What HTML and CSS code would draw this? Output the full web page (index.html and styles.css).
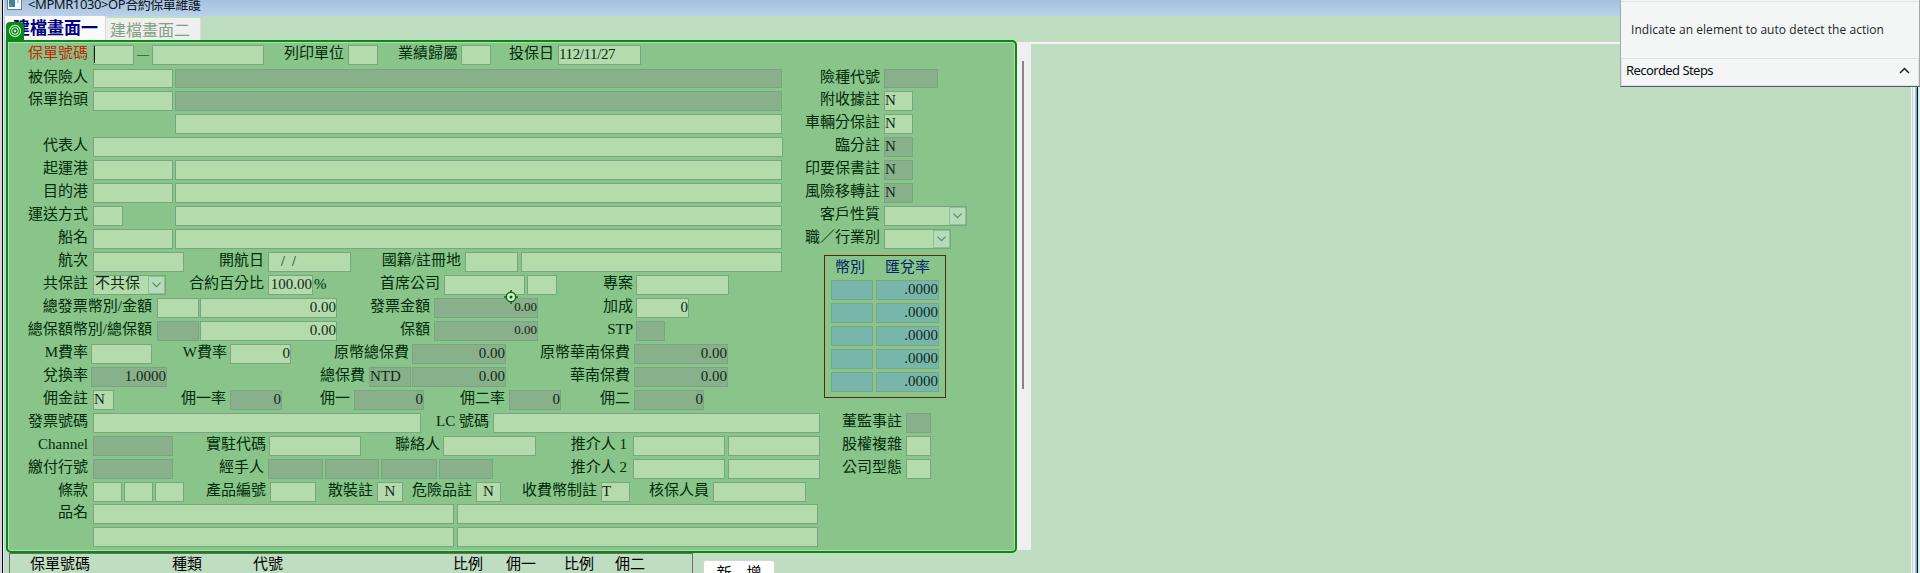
FILE: index.html
```html
<!DOCTYPE html>
<html lang="zh-Hant">
<head>
<meta charset="utf-8">
<title>OP合約保單維護</title>
<link rel="stylesheet" href="styles.css">
</head>
<body>
<div class="window">
  <header class="titlebar">
    <svg class="app-icon" width="15" height="10" viewBox="0 0 15 10"><path d="M0 0h15v10H0z" fill="#6d7f8c"/><path d="M1 0h13v9H1z" fill="#f4f7f8"/><path d="M2 0h6v7H2z" fill="#3f7fa0"/><path d="M2 4h3v3H2z" fill="#4f9a76"/><path d="M10 0h2v3h-2z" fill="#c3d3dc"/></svg>
    <span class="title">&lt;MPMR1030&gt;OP合約保單維護</span>
  </header>
  <nav class="tabs">
    <span class="tab active">建檔畫面一</span><span class="tab">建檔畫面二</span>
    <svg class="badge" width="18" height="19" viewBox="0 0 18 19"><path d="M0 19V4a4 4 0 0 1 4-4h10a4 4 0 0 1 4 4v15z" fill="#0a8a14"/><g fill="none" stroke="#d5efd5" stroke-width="1.1"><circle cx="9" cy="9" r="5.6"/><circle cx="9" cy="9" r="3.2"/></g><circle cx="9" cy="9" r="1.2" fill="#d5efd5"/></svg>
  </nav>
  <div class="work">
    <main class="panel">
      <section class="rows">
        <div class="row r-policy"><label class="req">保單號碼</label><i class="f caret"></i><label class="dash">—</label><i class="f"></i><label>列印單位</label><i class="f"></i><label class="near">業績歸屬</label><i class="f"></i><label>投保日</label><i class="f date">112/11/27</i></div>
        <div class="row r-insured"><label>被保險人</label><i class="f"></i><i class="f d"></i><label>險種代號</label><i class="f d"></i></div>
        <div class="row r-pair"><label>保單抬頭</label><i class="f"></i><i class="f d"></i><label>附收據註</label><i class="f">N</i></div>
        <div class="row r-cont"><label></label><i class="f"></i><label>車輛分保註</label><i class="f">N</i></div>
        <div class="row r-rep"><label>代表人</label><i class="f"></i><label>臨分註</label><i class="f d">N</i></div>
        <div class="row r-pair"><label>起運港</label><i class="f"></i><i class="f"></i><label>印要保書註</label><i class="f d">N</i></div>
        <div class="row r-pair"><label>目的港</label><i class="f"></i><i class="f"></i><label>風險移轉註</label><i class="f d">N</i></div>
        <div class="row r-ship"><label>運送方式</label><i class="f"></i><span></span><i class="f"></i><label>客戶性質</label><i class="f sel"><b><svg width="9" height="6" viewBox="0 0 9 6"><path d="M.5 .7l4 4 4-4"/></svg></b></i></div>
        <div class="row r-vessel"><label>船名</label><i class="f"></i><i class="f"></i><label>職／行業別</label><i class="f sel"><b><svg width="9" height="6" viewBox="0 0 9 6"><path d="M.5 .7l4 4 4-4"/></svg></b></i></div>
      </section>
      <section class="middle">
        <div class="rows">
          <div class="row r-voyage"><label>航次</label><i class="f"></i><label>開航日</label><i class="f blank-date">/&nbsp; /</i><label>國籍/註冊地</label><i class="f"></i><i class="f"></i></div>
          <div class="row r-share"><label>共保註</label><i class="f sel">不共保<b><svg width="9" height="6" viewBox="0 0 9 6"><path d="M.5 .7l4 4 4-4"/></svg></b></i><label>合約百分比</label><i class="f n pct">100.00</i><span class="unit">%</span><label>首席公司</label><i class="f"></i><i class="f"></i><label class="near">專案</label><i class="f"></i></div>
          <div class="row r-invoice"><label class="wide">總發票幣別/金額</label><i class="f"></i><i class="f n">0.00</i><label>發票金額</label><i class="f d n small">0.00</i><label class="near">加成</label><i class="f n">0</i></div>
          <div class="row r-sum"><label class="wide">總保額幣別/總保額</label><i class="f d"></i><i class="f n">0.00</i><label>保額</label><i class="f d n small">0.00</i><label class="near">STP</label><i class="f d"></i></div>
          <div class="row r-rate"><label>M費率</label><i class="f"></i><label class="near">W費率</label><i class="f n">0</i><label class="near">原幣總保費</label><i class="f d n">0.00</i><label>原幣華南保費</label><i class="f d n">0.00</i></div>
          <div class="row r-exchange"><label>兌換率</label><i class="f d n">1.0000</i><label>總保費</label><i class="f d">NTD</i><i class="f d n">0.00</i><label>華南保費</label><i class="f d n">0.00</i></div>
          <div class="row r-comm"><label>佣金註</label><i class="f">N</i><label>佣一率</label><i class="f d n">0</i><label>佣一</label><i class="f d n">0</i><label>佣二率</label><i class="f d n">0</i><label>佣二</label><i class="f d n">0</i></div>
        </div>
        <aside class="rates">
          <div class="rates-head"><span>幣別</span><span>匯兌率</span></div>
          <div class="rates-row"><i class="f t"></i><i class="f t n">.0000</i></div>
          <div class="rates-row"><i class="f t"></i><i class="f t n">.0000</i></div>
          <div class="rates-row"><i class="f t"></i><i class="f t n">.0000</i></div>
          <div class="rates-row"><i class="f t"></i><i class="f t n">.0000</i></div>
          <div class="rates-row"><i class="f t"></i><i class="f t n">.0000</i></div>
        </aside>
      </section>
      <section class="rows">
        <div class="row r-bill"><label>發票號碼</label><i class="f"></i><label>LC 號碼</label><i class="f"></i><label>董監事註</label><i class="f d"></i></div>
        <div class="row r-channel"><label>Channel</label><i class="f d"></i><label class="near">實駐代碼</label><i class="f"></i><label class="near">聯絡人</label><i class="f"></i><label class="ref">推介人 1</label><i class="f"></i><i class="f"></i><label>股權複雜</label><i class="f"></i></div>
        <div class="row r-payer"><label>繳付行號</label><i class="f d"></i><label>經手人</label><i class="f d"></i><i class="f d"></i><i class="f d"></i><i class="f d"></i><label class="ref">推介人 2</label><i class="f"></i><i class="f"></i><label>公司型態</label><i class="f"></i></div>
        <div class="row r-clause"><label>條款</label><i class="f"></i><i class="f"></i><i class="f"></i><label>產品編號</label><i class="f"></i><label>散裝註</label><i class="f c">N</i><label>危險品註</label><i class="f c">N</i><label>收費幣制註</label><i class="f">T</i><label>核保人員</label><i class="f"></i></div>
        <div class="row r-goods"><label>品名</label><i class="f"></i><i class="f"></i></div>
        <div class="row r-goods"><label></label><i class="f"></i><i class="f"></i></div>
      </section>
      <svg class="target" width="14" height="14" viewBox="0 0 14 14"><path d="M7 0v14M0 7h14" stroke="#0b6d14" stroke-width="1.6"/><circle cx="7" cy="7" r="4.7" fill="#d3ecd0" stroke="#0b6d14" stroke-width="1.5"/><circle cx="7" cy="7" r="1.5" fill="#0b5a12"/></svg>
    </main>
    <div class="scroll"><div class="thumb"></div></div>
    <div class="rest"></div>
  </div>
  <footer class="bottom">
    <div class="list-head"><span>保單號碼</span><span>種類</span><span>代號</span><span>比例</span><span>佣一</span><span>比例</span><span>佣二</span></div>
    <button class="add">新　增</button>
  </footer>
  <div class="edge"></div>
</div>
<div class="recorder">
  <div class="hint">Indicate an element to auto detect the action</div>
  <div class="steps"><span>Recorded Steps</span><svg width="11" height="7" viewBox="0 0 11 7"><path d="M1 6l4.500-4.500L10 6" fill="none" stroke="#222" stroke-width="1.5"/></svg></div>
</div>
</body>
</html>
```

FILE: styles.css
```css
* { box-sizing: border-box; }
body {
  margin: 0;
  width: 1920px;
  height: 573px;
  overflow: hidden;
  background: #bfddc1;
  font: 400 15px/18px "Liberation Serif", "Noto Sans CJK TC", serif;
}
i { font-style: normal; }
.window {
  position: relative;
  height: 573px;
  padding-left: 5px;
  overflow: hidden;
  background: linear-gradient(90deg, #d8d8d8 0 2px, #05070c 2px 3px, #e6eef6 3px 4px, #b5cde6 4px 5px, transparent 5px);
}

/* Title bar */
.titlebar {
  display: flex;
  height: 16px;
  padding-left: 2px;
  overflow: hidden;
  background: linear-gradient(#a7c0de, #b9d1ea);
}
.title {
  margin: -5px 0 0 6px;
  font: 13px/18px "Noto Sans", "Noto Sans CJK TC", sans-serif;
  color: #0b1420;
  letter-spacing: -0.42px;
}

/* Tabs */
.tabs { position: relative; display: flex; height: 24px; align-items: flex-end; }
.tab {
  width: 95px;
  height: 22px;
  padding-left: 4px;
  background: #eeefee;
  border-right: 1px solid #dcdcdc;
  font-size: 16px;
  line-height: 25px;
  color: #83a083;
  white-space: nowrap;
}
.tab.active {
  width: 101px;
  height: 24px;
  padding-left: 8px;
  background: #fafafa;
  font-weight: 700;
  font-size: 17px;
  line-height: 26px;
  color: #000080;
}
.badge { position: absolute; left: 1px; top: 6px; }

/* Work area */
.work { display: flex; height: 513px; padding-left: 1px; }
.panel {
  position: relative;
  width: 1011px;
  border: 2px solid #068a10;
  border-radius: 0 5px 5px 5px;
  box-shadow: inset 0 0 0 1px #b2dab3;
  background: #89c48a;
  padding: 3px 0 0 1px;
}
.scroll { width: 14px; height: 508px; margin-top: 2px; padding: 19px 0 0 5px; background: #efefef; }
.thumb { width: 2px; height: 328px; background: #868686; }
.rest { flex: 1; margin-top: 2px; border-top: 2px solid #f4f4f4; }

.row { display: grid; height: 23px; --gap: 2px; }
.row label {
  padding-right: 4px;
  text-align: right;
  line-height: 17px;
  color: #002c08;
  white-space: nowrap;
}
.row label:first-child { padding-right: 5px; }
.row label.wide { padding-right: 5px; }
.row label.near { padding-right: 3px; }
.row label.req { color: #c02a08; }
.row label.dash { padding: 1px 3px 0 0; font-size: 12px; }
.row label.ref { padding-right: 6px; }
.unit { padding-left: 1px; color: #002c08; line-height: 19px; }

/* Fields */
.f {
  display: block;
  height: 20px;
  padding: 0;
  border: 1px solid #7aa582;
  background: #b4dbab;
  color: #0f2a14;
  line-height: 17px;
  white-space: nowrap;
  overflow: hidden;
}
.row .f + .f { margin-left: var(--gap); }
.f.d { background: #88b08a; }
.f.t { background: #78b6ac; }
.f.n { text-align: right; }
.f.c { text-align: center; }
.f.small { font-size: 13px; line-height: 16px; }
.f.date { letter-spacing: -0.4px; }
.f.blank-date { padding-left: 12px; font-size: 14px; }
.f.caret::before { content: ""; display: block; width: 1px; height: 17px; background: #06200c; }
.f.sel { display: flex; justify-content: flex-end; padding: 0 1px; line-height: 15px; }
.f.sel b {
  display: flex;
  width: 17px;
  flex: none;
  margin-left: auto;
  margin-right: -1px;
  align-items: center;
  justify-content: center;
  border: 1px solid #8fbd97;
  background: #b5dcb9;
}
.f.sel path { fill: none; stroke: #5a8a63; stroke-width: 1.1; }

/* Column tracks of each form row */
.r-policy { height: 24px; grid-template-columns: 84px 41px 18px 112px 84px 30px 83px 30px 67px 83px; }
.r-insured { height: 22px; grid-template-columns: 84px 80px 609px 102px 54px; }
.r-insured .f { height: 19px; }
.r-pair { grid-template-columns: 84px 80px 609px 102px 29px; }
.r-cont { grid-template-columns: 166px 607px 102px 29px; }
.r-rep { grid-template-columns: 84px 690px 101px 29px; }
.r-ship { grid-template-columns: 84px 30px 52px 607px 102px 83px; }
.r-vessel { grid-template-columns: 84px 80px 609px 102px 67px; }
.r-voyage { --gap: 3px; grid-template-columns: 84px 91px 84px 83px 114px 53px 264px; }
.r-share { grid-template-columns: 84px 73px 102px 45px 20px 111px 81px 32px 79px 93px; }
.r-invoice { --gap: 1px; grid-template-columns: 148px 42px 138px 97px 104px 98px 53px; }
.r-sum { --gap: 1px; grid-template-columns: 148px 42px 138px 97px 104px 98px 29px; }
.r-rate { grid-template-columns: 82px 61px 78px 61px 121px 94px 128px 94px; }
.r-exchange { --gap: 1px; grid-template-columns: 82px 76px 202px 42px 95px 128px 94px; }
.row.r-rate label:first-child, .row.r-exchange label:first-child { padding-right: 3px; }
.r-comm { grid-template-columns: 84px 21px 116px 52px 72px 70px 85px 52px 73px 70px; }
.r-bill { grid-template-columns: 84px 328px 72px 327px 86px 25px; }
.r-channel { --gap: 3px; grid-template-columns: 84px 80px 96px 92px 82px 93px 97px 92px 95px 86px 25px; }
.r-payer { grid-template-columns: 84px 80px 95px 55px 56px 58px 56px 140px 92px 95px 86px 25px; }
.r-payer label + .f + .f:not(.d) { --gap: 3px; }
.r-clause { height: 22px; grid-template-columns: 84px 29px 31px 31px 86px 46px 61px 26px 73px 25px 100px 29px 83px 93px; }
.r-goods { --gap: 3px; grid-template-columns: 84px 361px 364px; }

/* Exchange rate table */
.middle { display: flex; }
.middle .rows { width: 815px; }
.rates { width: 122px; height: 143px; margin-top: 3px; padding: 3px 6px 0; border: 1px solid #5a2708; }
.rates-head { display: flex; height: 21px; padding-left: 4px; gap: 20px; color: #00246a; line-height: 17px; }
.rates-row { display: grid; grid-template-columns: 42px 63px; gap: 3px; height: 23px; }

.target { position: absolute; left: 496px; top: 248px; }

/* Lower list */
.bottom { display: flex; height: 20px; padding-left: 4px; }
.list-head {
  display: grid;
  grid-template-columns: 142px 81px 200px 53px 58px 51px 60px;
  width: 684px;
  padding: 0 0 0 20px;
  border: 1px solid #6c6c6c;
  border-bottom: 0;
  line-height: 20px;
  color: #000;
  white-space: nowrap;
}
.add {
  width: 72px;
  height: 26px;
  margin: 7px 0 0 10px;
  padding: 0;
  border: 1px solid #d4d4d4;
  border-radius: 3px;
  background: #fff;
  color: #000;
  font: inherit;
}
.edge {
  position: absolute;
  right: 0;
  top: 0;
  width: 9px;
  height: 573px;
  background: linear-gradient(90deg, #f2f5f2 0 1px, #c8d8ca 1px 2px, #eef3f6 2px 4px, #b4c4d0 4px 5px, #2fc0ee 5px 6px, #06080a 6px 7px, #e8e8e8 7px);
}

/* Recorder overlay */
.recorder {
  position: absolute;
  right: 0;
  top: 0;
  width: 300px;
  height: 87px;
  border: 1px solid #a4a8aa;
  border-top: 0;
  border-bottom: 1px solid #55595b;
  background: #f4f6f6;
  color: #23262b;
}
.hint {
  height: 57px;
  margin-top: 1px;
  padding: 19px 0 0 10px;
  border-top: 1px solid #dfe2e3;
  font: 12px/18px "Open Sans", "Noto Sans", sans-serif;
  letter-spacing: 0.04px;
  white-space: nowrap;
}
.steps {
  display: flex;
  align-items: center;
  justify-content: space-between;
  height: 28px;
  padding: 0 8px 4px 4px;
  border: 1px solid #e0e3e5;
  font: 13px/18px "Noto Sans", sans-serif;
  letter-spacing: -0.55px;
  color: #0c0d10;
}
```
